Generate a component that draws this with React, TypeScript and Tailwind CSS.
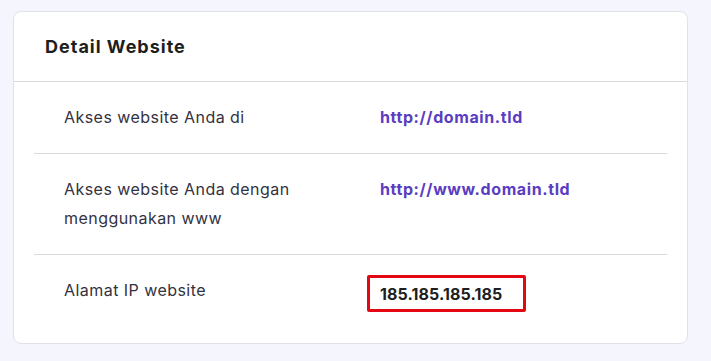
const rows = [
  { label: "Akses website Anda di", value: "http://domain.tld", link: true },
  { label: "Akses website Anda dengan menggunakan www", value: "http://www.domain.tld", link: true },
  { label: "Alamat IP website", value: "185.185.185.185", link: false },
];

export default function App() {
  return (
    <div className="min-h-[361px] w-[711px] bg-[#f4f5fd] pt-[11px] pl-[13px] font-['Inter',sans-serif]">
      <div className="w-[675px] h-[333px] rounded-[8px] border border-[#e1e1ea] bg-white">
        <div className="h-[70px] flex items-center pl-[31px] border-b border-[#d9d9e0]">
          <h2 className="text-[18px] font-bold text-[#1d1e20] tracking-[1px]">Detail Website</h2>
        </div>
        <div className="px-[20px]">
          {rows.map((r, i) => (
            <div
              key={r.value}
              className={`flex py-[21px] pl-[30px] ${i < rows.length - 1 ? "border-b border-[#dadae0]" : ""}`}
            >
              <div className="w-[316px] pr-[40px] text-[16px] leading-[29px] tracking-[0.45px] text-[#33323f]">
                {r.label}
              </div>
              {r.link ? (
                <a href="#" className="text-[16px] leading-[29px] font-bold tracking-[0.6px] text-[#5a3dc2]">
                  {r.value}
                </a>
              ) : (
                <div className="-ml-[13px] -mt-[1px] h-[37px] w-[159px] border-[3px] border-[#e30613] rounded-[2px] pl-[10px] flex items-center text-[16px] font-bold tracking-[0.1px] text-[#1d1e20]">
                  {r.value}
                </div>
              )}
            </div>
          ))}
        </div>
      </div>
    </div>
  );
}
